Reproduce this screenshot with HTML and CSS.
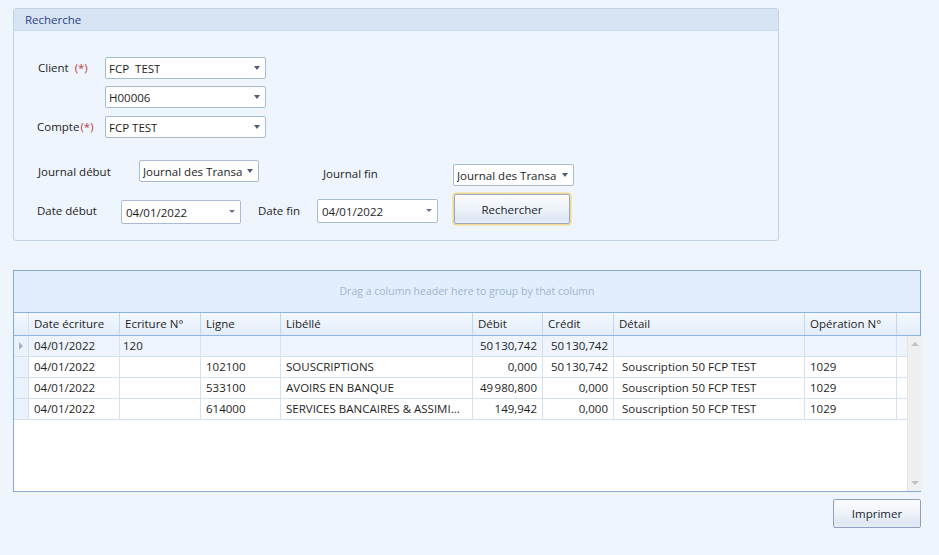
FILE: index.html
```html
<!DOCTYPE html>
<html lang="fr">
<head>
<meta charset="utf-8">
<title>Recherche</title>
<link rel="stylesheet" href="styles.css">
</head>
<body>
<div class="page">
  <section class="panel">
    <div class="panel-head">Recherche</div>
    <div class="panel-body">
      <div class="row row-client">
        <div class="lbl lbl-main">Client&nbsp;&nbsp;<span class="req">(*)</span></div>
        <div class="combo w161"><span class="val">FCP&nbsp; TEST</span><span class="arrow"></span></div>
      </div>
      <div class="row row-h">
        <div class="lbl lbl-main"></div>
        <div class="combo w161"><span class="val">H00006</span><span class="arrow"></span></div>
      </div>
      <div class="row row-compte">
        <div class="lbl lbl-main lbl-compte">Compte<span class="req">(*)</span></div>
        <div class="combo w161"><span class="val">FCP TEST</span><span class="arrow"></span></div>
      </div>
      <div class="row row-journal">
        <div class="lbl lbl-jdeb">Journal début</div>
        <div class="combo w120"><span class="val">Journal des Transactions</span><span class="arrow"></span></div>
        <div class="lbl lbl-jfin">Journal fin</div>
        <div class="combo w121 jfin-combo"><span class="val">Journal des Transactions</span><span class="arrow"></span></div>
      </div>
      <div class="row row-date">
        <div class="lbl lbl-ddeb">Date début</div>
        <div class="date w120 ddeb"><span class="val">04/01/2022</span><span class="arrow small"></span></div>
        <div class="lbl lbl-dfin">Date fin</div>
        <div class="date w121 dfin"><span class="val">04/01/2022</span><span class="arrow small"></span></div>
        <button class="btn btn-search" type="button">Rechercher</button>
      </div>
    </div>
  </section>

  <section class="grid">
    <div class="group-panel">Drag a column header here to group by that column</div>
    <div class="grid-head">
      <div class="hc c0"></div>
      <div class="hc c1">Date écriture</div>
      <div class="hc c2">Ecriture N°</div>
      <div class="hc c3">Ligne</div>
      <div class="hc c4">Libéllé</div>
      <div class="hc c5">Débit</div>
      <div class="hc c6">Crédit</div>
      <div class="hc c7">Détail</div>
      <div class="hc c8">Opération N°</div>
      <div class="hc c9"></div>
    </div>
    <div class="grid-body">
      <div class="rows">
        <div class="gr current">
          <div class="cell c0 ind"><span class="tri"></span></div>
          <div class="cell c1">04/01/2022</div>
          <div class="cell c2">120</div>
          <div class="cell c3"></div>
          <div class="cell c4"></div>
          <div class="cell c5 num">50&#8239;130,742</div>
          <div class="cell c6 num">50&#8239;130,742</div>
          <div class="cell c7"></div>
          <div class="cell c8"></div>
          <div class="cell c9"></div>
        </div>
        <div class="gr">
          <div class="cell c0 ind"></div>
          <div class="cell c1">04/01/2022</div>
          <div class="cell c2"></div>
          <div class="cell c3">102100</div>
          <div class="cell c4">SOUSCRIPTIONS</div>
          <div class="cell c5 num">0,000</div>
          <div class="cell c6 num">50&#8239;130,742</div>
          <div class="cell c7">Souscription 50 FCP TEST</div>
          <div class="cell c8">1029</div>
          <div class="cell c9"></div>
        </div>
        <div class="gr">
          <div class="cell c0 ind"></div>
          <div class="cell c1">04/01/2022</div>
          <div class="cell c2"></div>
          <div class="cell c3">533100</div>
          <div class="cell c4">AVOIRS EN BANQUE</div>
          <div class="cell c5 num">49&#8239;980,800</div>
          <div class="cell c6 num">0,000</div>
          <div class="cell c7">Souscription 50 FCP TEST</div>
          <div class="cell c8">1029</div>
          <div class="cell c9"></div>
        </div>
        <div class="gr">
          <div class="cell c0 ind"></div>
          <div class="cell c1">04/01/2022</div>
          <div class="cell c2"></div>
          <div class="cell c3">614000</div>
          <div class="cell c4">SERVICES BANCAIRES &amp; ASSIMI...</div>
          <div class="cell c5 num">149,942</div>
          <div class="cell c6 num">0,000</div>
          <div class="cell c7">Souscription 50 FCP TEST</div>
          <div class="cell c8">1029</div>
          <div class="cell c9"></div>
        </div>
      </div>
      <div class="vscroll">
        <span class="sarrow up"></span>
        <span class="sarrow down"></span>
      </div>
    </div>
  </section>

  <div class="footer">
    <button class="btn btn-print" type="button">Imprimer</button>
  </div>
</div>
</body>
</html>
```

FILE: styles.css
```css
* { box-sizing: border-box; }
html, body { margin: 0; padding: 0; }
body {
  background: #eef5fd;
  font-family: "Open Sans", "Noto Sans", sans-serif;
  font-size: 11.5px;
  color: #1e1e1e;
  width: 939px;
  height: 555px;
  overflow: hidden;
}
.page { padding: 8px 0 0 13px; }

/* Panel */
.panel {
  width: 766px;
  height: 233px;
  border: 1px solid #c3d3e6;
  border-radius: 3px;
  background: #eef5fd;
}
.panel-head {
  height: 22px;
  background: #d6e4f4;
  border-bottom: 1px solid #c9daee;
  color: #2a3f8a;
  padding: 3px 0 0 11px;
  line-height: 16px;
}
.panel-body { padding: 26px 0 0 0; }
.row { display: flex; align-items: center; }
.row-h { margin-top: 7px; }
.row-compte { margin-top: 8px; }
.row-journal { margin-top: 22px; align-items: flex-start; }
.row-date { margin-top: 8px; align-items: flex-start; }

.lbl { flex: none; line-height: 16px; }
.lbl-main { width: 91px; padding-left: 24px; }
.lbl-compte { padding-left: 23px; }
.req { color: #c04040; }
.lbl-compte .req { margin-left: 1px; }
.lbl-jdeb { width: 125px; padding-left: 24px; margin-top: 4px; }
.lbl-jfin { width: 194px; padding-left: 64px; margin-top: 6px; }
.lbl-ddeb { width: 107px; padding-left: 23px; margin-top: 9px; }
.lbl-dfin { width: 76px; padding-left: 17px; margin-top: 9px; }

.combo, .date {
  flex: none;
  position: relative;
  height: 22px;
  background: #fff;
  border: 1px solid #a9bcd6;
  border-radius: 2px;
  display: flex;
  align-items: center;
  padding: 0 16px 0 3px;
  overflow: hidden;
  white-space: nowrap;
}
.date { height: 24px; padding-left: 4px; }
.w161 { width: 161px; }
.w120 { width: 120px; }
.w121 { width: 121px; }
.jfin-combo { margin-top: 4px; }
.ddeb { margin-top: 6px; }
.dfin { margin-top: 5px; }
.val { overflow: hidden; white-space: nowrap; display: block; }
.arrow {
  position: absolute;
  right: 5px;
  top: 50%;
  margin-top: -2px;
  width: 0; height: 0;
  border-left: 3.5px solid transparent;
  border-right: 3.5px solid transparent;
  border-top: 4px solid #4c5d77;
}
.arrow.small {
  right: 5px;
  border-left-width: 3px;
  border-right-width: 3px;
  border-top-width: 3px;
  border-top-color: #66758c;
}

.btn {
  font-family: inherit;
  font-size: 11.5px;
  font-weight: 500;
  color: #1a2433;
  border: 1px solid #8fa2bd;
  border-radius: 2px;
  background: linear-gradient(#fbfcfe 0%, #eef3f9 50%, #dde7f3 85%, #e8eef6 100%);
  padding: 0;
}
.btn-search {
  width: 116px;
  height: 30px;
  margin-left: 16px;
  border-color: #9aa9bf;
  box-shadow: 0 0 0 1.5px #f3da92;
}

/* Grid */
.grid {
  margin-top: 29px;
  width: 908px;
  height: 222px;
  border: 1px solid #86a9d9;
  background: #fff;
  display: flex;
  flex-direction: column;
}
.group-panel {
  height: 42px;
  background: #e2eefc;
  border-bottom: 1px solid #8bb0e2;
  color: #9fb5d0;
  font-size: 10.5px;
  text-align: center;
  line-height: 40px;
}
.grid-head {
  display: flex;
  height: 23px;
  background: linear-gradient(#f4f8fe, #e2edfa);
  border-bottom: 1px solid #8eb3e4;
}
.hc {
  flex: none;
  padding-left: 5px;
  line-height: 21px;
  border-right: 1px solid #c3d6ef;
  white-space: nowrap;
}
.c0 { width: 15px; }
.c1 { width: 91px; }
.c2 { width: 81px; }
.c3 { width: 80px; }
.c4 { width: 192px; }
.c5 { width: 70px; }
.c6 { width: 71px; }
.c7 { width: 191px; }
.c8 { width: 92px; }
.hc.c9 { flex: 1; border-right: 0; }
.hc.c0 { border-right: 1px solid #d2e1f3; }

.grid-body { flex: 1; display: flex; }
.rows { flex: 1; }
.gr { display: flex; height: 21px; border-bottom: 1px solid #d3e1f2; }
.gr.current { background: #eef4fc; }
.cell {
  flex: none;
  padding: 0 5px;
  line-height: 20px;
  border-right: 1px solid #d3e1f2;
  white-space: nowrap;
  overflow: hidden;
}
.cell.c2 { padding-left: 3px; }
.cell.c7 { padding-left: 8px; }
.cell.c9 { flex: 1; border-right: 0; }
.cell.num { text-align: right; }
.ind { background: #eaf2fc; position: relative; padding: 0; }
.tri {
  position: absolute;
  left: 5px;
  top: 6px;
  width: 0; height: 0;
  border-top: 4px solid transparent;
  border-bottom: 4px solid transparent;
  border-left: 4px solid #9fb3cf;
}
.vscroll {
  width: 15px;
  flex: none;
  background: #f0f0f0;
  border-left: 1px solid #e4e4e4;
  display: flex;
  flex-direction: column;
  justify-content: space-between;
  align-items: center;
  padding: 6px 0 6px;
}
.sarrow { width: 0; height: 0; border-left: 4px solid transparent; border-right: 4px solid transparent; }
.sarrow.up { border-bottom: 4px solid #c2c2c2; }
.sarrow.down { border-top: 4px solid #c2c2c2; }

.footer { width: 908px; display: flex; justify-content: flex-end; margin-top: 7px; }
.btn-print { width: 88px; height: 29px; }
```
